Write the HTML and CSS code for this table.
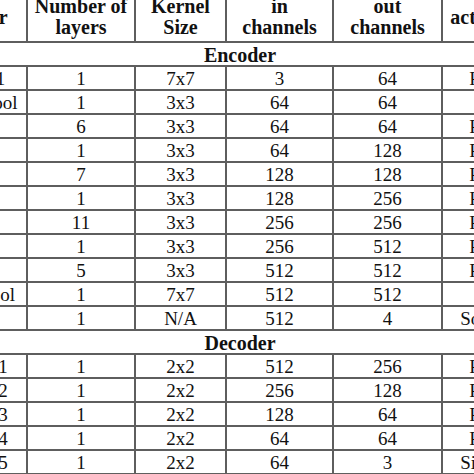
FILE: index.html
```html
<!DOCTYPE html>
<html>
<head>
<meta charset="utf-8">
<link rel="stylesheet" href="styles.css">
</head>
<body>
<div class="viewport">
<table class="arch">
<colgroup>
<col class="c1"><col class="c2"><col class="c3"><col class="c4"><col class="c5"><col class="c6">
</colgroup>
<thead>
<tr><th>Layer</th><th>Number of<br>layers</th><th>Kernel<br>Size</th><th>in<br>channels</th><th>out<br>channels</th><th>activation</th></tr>
</thead>
<tbody>
<tr class="section"><td colspan="6">Encoder</td></tr>
<tr><td>conv1</td><td>1</td><td>7x7</td><td>3</td><td>64</td><td>ReLU</td></tr>
<tr><td>max pool</td><td>1</td><td>3x3</td><td>64</td><td>64</td><td></td></tr>
<tr><td>res1</td><td>6</td><td>3x3</td><td>64</td><td>64</td><td>ReLU</td></tr>
<tr><td>res2</td><td>1</td><td>3x3</td><td>64</td><td>128</td><td>ReLU</td></tr>
<tr><td>res3</td><td>7</td><td>3x3</td><td>128</td><td>128</td><td>ReLU</td></tr>
<tr><td>res4</td><td>1</td><td>3x3</td><td>128</td><td>256</td><td>ReLU</td></tr>
<tr><td>res5</td><td>11</td><td>3x3</td><td>256</td><td>256</td><td>ReLU</td></tr>
<tr><td>res6</td><td>1</td><td>3x3</td><td>256</td><td>512</td><td>ReLU</td></tr>
<tr><td>res7</td><td>5</td><td>3x3</td><td>512</td><td>512</td><td>ReLU</td></tr>
<tr><td>avg pool</td><td>1</td><td>7x7</td><td>512</td><td>512</td><td></td></tr>
<tr><td>fc</td><td>1</td><td>N/A</td><td>512</td><td>4</td><td>Softmax</td></tr>
<tr class="section"><td colspan="6">Decoder</td></tr>
<tr><td>tconv1</td><td>1</td><td>2x2</td><td>512</td><td>256</td><td>ReLU</td></tr>
<tr><td>tconv2</td><td>1</td><td>2x2</td><td>256</td><td>128</td><td>ReLU</td></tr>
<tr><td>tconv3</td><td>1</td><td>2x2</td><td>128</td><td>64</td><td>ReLU</td></tr>
<tr><td>tconv4</td><td>1</td><td>2x2</td><td>64</td><td>64</td><td>ReLU</td></tr>
<tr><td>tconv5</td><td>1</td><td>2x2</td><td>64</td><td>3</td><td>Sigmoid</td></tr>
</tbody>
</table>
</div>
</body>
</html>
```
FILE: styles.css
```css
html, body {
  margin: 0;
  padding: 0;
  background: #ffffff;
}
.viewport {
  width: 474px;
  height: 474px;
  overflow: hidden;
  background: #ffffff;
}
.arch {
  border-collapse: collapse;
  table-layout: fixed;
  width: 606px;
  margin-left: -64px;
  margin-top: -9px;
  font-family: "Liberation Serif", "Times New Roman", serif;
  color: #111111;
}
.c1 { width: 90px; }
.c2 { width: 108px; }
.c3 { width: 91px; }
.c4 { width: 107px; }
.c5 { width: 109px; }
.c6 { width: 101px; }
.arch th,
.arch td {
  border: 2px solid #5e5e5e;
  text-align: center;
  white-space: nowrap;
  overflow: hidden;
}
.arch th {
  font-size: 20px;
  font-weight: bold;
  line-height: 21px;
  padding: 3px 0 3px 0;
  vertical-align: middle;
}
.arch td {
  font-size: 19px;
  line-height: 20px;
  padding: 2px 0 0 0;
}
.arch .section td {
  font-size: 20px;
  font-weight: bold;
}
```
